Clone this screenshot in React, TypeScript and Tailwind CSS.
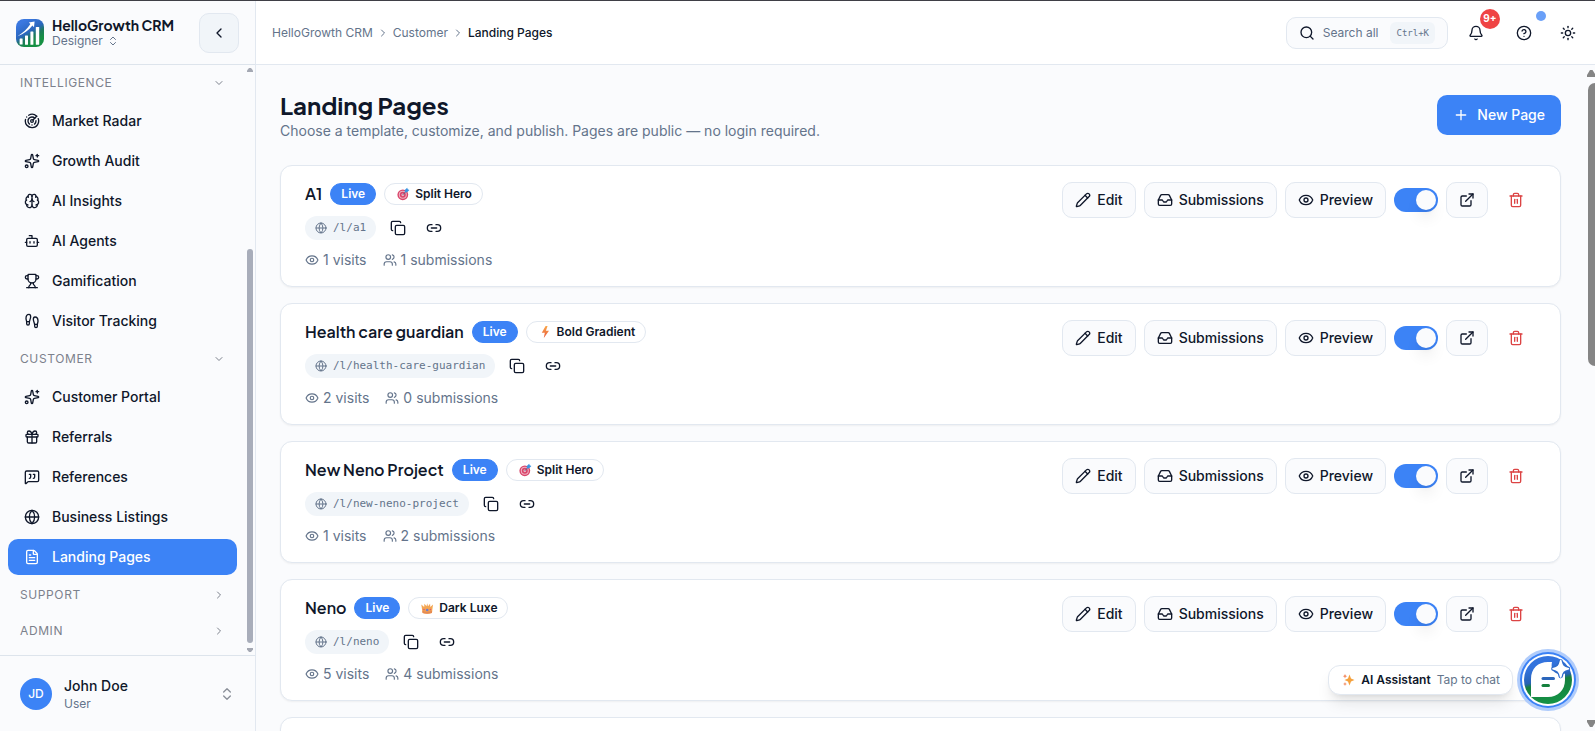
import React from "react";
import {
  Bell, Bot, Brain, ChevronDown, ChevronLeft, ChevronRight, ChevronsUpDown, CircleHelp, Copy, ExternalLink,
  Eye, FileText, Footprints, Gift, Globe, Inbox, Link2, MessageSquareQuote, Pencil, Plus, Radar, Search, Sparkles, Sun,
  Trash2, Trophy, Users,
} from "lucide-react";

type Template = "Split Hero" | "Bold Gradient" | "Dark Luxe";
type Page = { title: string; slug: string; template: Template; visits: number; submissions: number };

const pages: Page[] = [
  { title: "A1", slug: "a1", template: "Split Hero", visits: 1, submissions: 1 },
  { title: "Health care guardian", slug: "health-care-guardian", template: "Bold Gradient", visits: 2, submissions: 0 },
  { title: "New Neno Project", slug: "new-neno-project", template: "Split Hero", visits: 1, submissions: 2 },
  { title: "Neno", slug: "neno", template: "Dark Luxe", visits: 5, submissions: 4 },
];

const heading = "font-['Plus_Jakarta_Sans','Inter',sans-serif]";

function AppLogo() {
  return (
    <svg viewBox="0 0 28 28" className="size-7 shrink-0" aria-hidden="true">
      <defs>
        <linearGradient id="logo-bg" x1="0.2" y1="0" x2="0.8" y2="1">
          <stop offset="0.1" stopColor="#3b78e0" />
          <stop offset="0.45" stopColor="#2a66bd" />
          <stop offset="0.62" stopColor="#1d7a5c" />
          <stop offset="0.8" stopColor="#169044" />
        </linearGradient>
      </defs>
      <rect width="28" height="28" rx="8" fill="url(#logo-bg)" />
      <g fill="#fff">
        <rect x="3.6" y="19.5" width="3" height="6" rx="0.5" />
        <rect x="9" y="16.5" width="3" height="9.3" rx="0.5" />
        <rect x="14.4" y="12.5" width="3" height="13.3" rx="0.5" />
        <rect x="19.8" y="8" width="3.4" height="17.8" rx="0.5" />
        <path d="M12.8 3.4 18.6 2.4 18 8.2 16.4 6.4C12.5 11.3 8 14.8 1.5 17.2 7 13.6 11.2 9.8 14.4 4.9Z" />
      </g>
    </svg>
  );
}

function TemplateIcon({ name }: { name: Template }) {
  if (name === "Split Hero")
    return (
      <svg viewBox="0 0 16 16" className="size-4" aria-hidden="true">
        <circle cx="7.8" cy="8.8" r="5.4" fill="#d9456a" />
        <circle cx="7.8" cy="8.8" r="4" fill="#efb3c3" />
        <circle cx="7.8" cy="8.8" r="3" fill="#d9456a" />
        <circle cx="7.8" cy="8.8" r="1.4" fill="#efb3c3" />
        <path d="M7.8 8.8 12 4.5" stroke="#4b5d8a" strokeWidth="0.9" />
        <path d="M9.800 6.200V4L12.200 1.700 12.700 3.300 14.400 3.900 12.200 6.200Z" fill="#3b94e0" />
      </svg>
    );
  if (name === "Bold Gradient")
    return (
      <svg viewBox="0 0 16 16" className="size-4" aria-hidden="true">
        <defs>
          <linearGradient id="bolt" x1="0" y1="0" x2="0" y2="1">
            <stop offset="0" stopColor="#f9a94b" />
            <stop offset="1" stopColor="#e8553a" />
          </linearGradient>
        </defs>
        <path d="M8.6 2 4.8 8.8H7.8L6.8 14 12 6.8H8.9L10.6 2Z" fill="url(#bolt)" />
      </svg>
    );
  return (
    <svg viewBox="0 0 16 16" className="size-4" aria-hidden="true">
      <path d="M2.300 4.500 5.200 7 5.400 3.800 7.500 6.300 8.200 3.200 9 6.300 11.100 3.800 11.300 7 14 4.500 12.900 13Q8.200 14.600 3.600 13Z" fill="#f3a552" />
      <path d="M3.300 10.800Q8.200 12.600 13.200 10.800L12.900 13Q8.200 14.600 3.600 13Z" fill="#e68a52" />
      <circle cx="8.2" cy="10" r="1.3" fill="#6b7bd0" />
      <circle cx="5" cy="9.6" r="0.8" fill="#dd5a6e" />
      <circle cx="11.4" cy="9.6" r="0.8" fill="#dd5a6e" />
    </svg>
  );
}

function ChatLogo() {
  return (
    <svg viewBox="0 0 62 62" className="size-[62px]" aria-hidden="true">
      <defs>
        <linearGradient id="chat-bg" x1="0.35" y1="0" x2="0.6" y2="1">
          <stop offset="0.2" stopColor="#3373dd" />
          <stop offset="0.48" stopColor="#2762b4" />
          <stop offset="0.56" stopColor="#15803d" />
          <stop offset="1" stopColor="#159447" />
        </linearGradient>
      </defs>
      <circle cx="31" cy="31" r="31" fill="#b0ccfb" />
      <circle cx="31" cy="31" r="28" fill="#3b82f6" />
      <circle cx="31" cy="31" r="26" fill="#fff" />
      <circle cx="31" cy="31" r="24" fill="url(#chat-bg)" />
      <path d="M14 48V30C14 19.500 21 13 31 13H35C34 18 35 21 38 23.500 41 25.500 45 25.500 48 24.500V31C48 41 41 48 31 48Z" fill="#fff" />
      <path d="M43.700 12.500C44.700 17 46.200 18.600 51 19.700 46.200 20.800 44.700 22.400 43.700 27 42.700 22.400 41.200 20.800 36.400 19.700 41.200 18.600 42.700 17 43.700 12.500Z" fill="#fff" stroke="#2f6ccc" strokeWidth="4.500" strokeLinejoin="round" />
      <path d="M43.700 11.500C44.900 17 46.200 18.400 51.500 19.700 46.200 21 44.900 22.400 43.700 28 42.500 22.400 41.200 21 35.900 19.700 41.200 18.400 42.500 17 43.700 11.500Z" fill="#fff" stroke="#fff" strokeWidth="1.500" strokeLinejoin="round" />
      <path d="M26 29.500H36.500" stroke="#2c66bb" strokeWidth="3" strokeLinecap="round" />
      <path d="M26 36.500H31.500" stroke="#15803d" strokeWidth="3" strokeLinecap="round" />
    </svg>
  );
}

type Icon = React.ComponentType<{ className?: string }>;

function NavItem({ icon: I, label, active }: { icon: Icon; label: string; active?: boolean }) {
  return (
    <li>
      <a
        href="#"
        aria-current={active ? "page" : undefined}
        className={`flex h-9 items-center gap-3 rounded-[10px] px-4 text-sm font-medium ${active ? "bg-[#3c83f6] text-white" : "text-[#0f172a]"}`}
      >
        <I className="size-4" />
        {label}
      </a>
    </li>
  );
}

function Section({ label, items }: { label: string; items?: React.ReactNode }) {
  return (
    <section>
      <button type="button" className="flex h-9 w-full items-center justify-between px-3 text-xs tracking-wider text-[#7c818c]">
        {label}
        {items ? <ChevronDown className="size-3" /> : <ChevronRight className="size-3" />}
      </button>
      {items && <ul className="flex flex-col gap-1 py-0.5">{items}</ul>}
    </section>
  );
}

function Sidebar() {
  return (
    <aside className="flex w-64 shrink-0 flex-col border-r border-[#e2e8f0] bg-[#fafbfd]">
      <div className="flex h-16 shrink-0 items-center gap-2 border-b border-[#dde4ec] px-4">
        <AppLogo />
        <div className="min-w-0 flex-1">
          <p className={`text-sm leading-4 font-bold whitespace-nowrap ${heading}`}>HelloGrowth CRM</p>
          <button type="button" className="flex items-center gap-1 text-xs leading-4 text-[#64748b]">
            Designer
            <ChevronsUpDown className="size-3" />
          </button>
        </div>
        <button type="button" aria-label="Collapse sidebar" className="flex size-10 shrink-0 items-center justify-center rounded-[10px] border border-[#e2e8f0] bg-[#f1f5f9]">
          <ChevronLeft className="size-4" />
        </button>
      </div>
      <div className="flex min-h-0 flex-1">
        <nav aria-label="Main" className="min-w-0 flex-1 overflow-hidden px-2">
          <Section
            label="INTELLIGENCE"
            items={
              <>
                <NavItem icon={Radar} label="Market Radar" />
                <NavItem icon={Sparkles} label="Growth Audit" />
                <NavItem icon={Brain} label="AI Insights" />
                <NavItem icon={Bot} label="AI Agents" />
                <NavItem icon={Trophy} label="Gamification" />
                <NavItem icon={Footprints} label="Visitor Tracking" />
              </>
            }
          />
          <Section
            label="CUSTOMER"
            items={
              <>
                <NavItem icon={Sparkles} label="Customer Portal" />
                <NavItem icon={Gift} label="Referrals" />
                <NavItem icon={MessageSquareQuote} label="References" />
                <NavItem icon={Globe} label="Business Listings" />
                <NavItem icon={FileText} label="Landing Pages" active />
              </>
            }
          />
          <Section label="SUPPORT" />
          <Section label="ADMIN" />
        </nav>
        <div aria-hidden="true" className="flex w-2.5 flex-col items-center py-[3px]">
          <svg viewBox="0 0 6 4" className="h-1 w-1.5"><path d="M2 0H4L6 2.500V4H0V2.500Z" fill="#a4a8b3" /></svg>
          <div className="flex-[177]" />
          <div className="w-1.5 flex-[394] rounded-full bg-[#a8adba]" />
          <svg viewBox="0 0 6 4" className="mt-[5px] h-1 w-1.5"><path d="M2 4H4L6 1.500V0H0V1.500Z" fill="#a4a8b3" /></svg>
        </div>
      </div>
      <button type="button" className="flex h-[76px] shrink-0 items-center gap-3 border-t border-[#dde4ec] px-5 text-left">
        <span className="flex size-8 items-center justify-center rounded-full bg-[#3c83f6] text-xs font-medium text-white">JD</span>
        <span className="flex-1">
          <span className="block text-sm leading-5 font-medium">John Doe</span>
          <span className="block text-xs leading-4 text-[#64748b]">User</span>
        </span>
        <ChevronsUpDown className="size-4 text-[#8a8f99]" />
      </button>
    </aside>
  );
}

function TopBar() {
  return (
    <header className="flex h-16 shrink-0 items-center gap-2 border-b border-[#e2e8f0] bg-white pr-[11px] pl-4">
      <nav aria-label="Breadcrumb" className="flex flex-1 items-center gap-1 text-xs text-[#64748b]">
        <a href="#">HelloGrowth CRM</a>
        <ChevronRight className="size-3" />
        <a href="#">Customer</a>
        <ChevronRight className="size-3" />
        <span aria-current="page" className="font-medium text-[#0f172a]">Landing Pages</span>
      </nav>
      <button type="button" className="flex h-8 items-center gap-2 rounded-[10px] border border-[#e2e8f0] bg-[#fafbfd] px-3 text-xs text-[#64748b]">
        <Search className="size-4 text-[#0f172a]" />
        Search all
        <kbd className="ml-1 flex h-[22px] items-center rounded-md bg-[#f1f5f9] px-1.5 font-['DejaVu_Sans_Mono',monospace] text-[9px]">Ctrl+K</kbd>
      </button>
      <button type="button" aria-label="Notifications" className="relative flex size-10 items-center justify-center">
        <Bell className="size-4" />
        <span className="absolute -top-1 -right-1 flex size-5 items-center justify-center rounded-full bg-[#ef4444] text-[10px] font-bold text-white">9+</span>
      </button>
      <button type="button" aria-label="Help" className="relative flex size-10 items-center justify-center">
        <CircleHelp className="size-4" />
        <span className="absolute -top-0.5 -right-0.5 size-2.5 rounded-full bg-[#6aa0f8]" />
      </button>
      <button type="button" aria-label="Theme" className="flex h-10 w-8 items-center justify-center">
        <Sun className="size-4" />
      </button>
    </header>
  );
}

const outline = "flex h-9 items-center gap-1.5 rounded-[10px] border border-[#e2e8f0] bg-[#fafbfd] px-3 text-sm font-medium";

function PageCard({ page }: { page: Page }) {
  return (
    <article className="flex items-start justify-between gap-4 rounded-xl border border-[#e2e8f0] bg-white px-6 py-4 shadow-xs">
      <div className="flex flex-col gap-2">
        <div className="flex h-6 items-center gap-2">
          <h2 className={`text-base font-semibold ${heading}`}>{page.title}</h2>
          <span className="rounded-full border border-[#3c83f6] bg-[#3c83f6] px-2.5 py-0.5 text-xs font-semibold text-white">Live</span>
          <span className="flex items-center gap-1 rounded-full border border-[#e2e8f0] px-2.5 py-0.5 text-xs font-semibold">
            <TemplateIcon name={page.template} />
            {page.template}
          </span>
        </div>
        <div className="flex h-7 items-center gap-2">
          <span className="flex h-6 items-center gap-1.5 rounded-full bg-[#f1f5f9] px-2.5 font-['DejaVu_Sans_Mono',monospace] text-[11px] text-[#64748b]">
            <Globe className="size-3" />
            /l/{page.slug}
          </span>
          <button type="button" aria-label="Copy link" className="flex size-7 items-center justify-center"><Copy className="size-4" /></button>
          <button type="button" aria-label="Edit link" className="flex size-7 items-center justify-center"><Link2 className="size-4" /></button>
        </div>
        <div className="flex h-5 items-center gap-4 text-sm text-[#64748b]">
          <span className="flex items-center gap-1"><Eye className="size-3.5" />{page.visits} visits</span>
          <span className="flex items-center gap-1"><Users className="size-3.5" />{page.submissions} submissions</span>
        </div>
      </div>
      <div className="flex items-center gap-2">
        <button type="button" className={outline}><Pencil className="size-4" />Edit</button>
        <button type="button" className={outline}><Inbox className="size-4" />Submissions</button>
        <button type="button" className={outline}><Eye className="size-4" />Preview</button>
        <label className="flex h-6 w-11 cursor-pointer items-center rounded-full bg-[#cbd5e1] p-0.5 has-checked:justify-end has-checked:bg-[#3c83f6]">
          <input type="checkbox" role="switch" defaultChecked aria-label={`Publish ${page.title}`} className="size-5 appearance-none rounded-full bg-[#fafbfd] shadow-lg" />
        </label>
        <button type="button" aria-label="Open page" className={outline}><ExternalLink className="size-4" /></button>
        <button type="button" aria-label="Delete page" className="flex h-9 items-center px-3 text-[#dc4444]"><Trash2 className="size-4" /></button>
      </div>
    </article>
  );
}

export default function App() {
  return (
    <div className="relative flex h-screen overflow-hidden border-t border-[#3f3f46] bg-[#fafbfd] font-['Inter',sans-serif] text-[#0f172a]">
      <Sidebar />
      <div className="flex min-w-0 flex-1 flex-col">
        <TopBar />
        <div className="flex min-h-0 flex-1">
          <main className="min-w-0 flex-1 overflow-hidden p-6">
            <div className="mb-6 flex items-center justify-between">
              <div>
                <h1 className={`text-2xl leading-8 font-bold ${heading}`}>Landing Pages</h1>
                <p className="text-sm text-[#64748b]">Choose a template, customize, and publish. Pages are public — no login required.</p>
              </div>
              <button type="button" className="flex h-10 items-center gap-2 rounded-[10px] bg-[#3c83f6] px-4 text-sm font-medium text-white">
                <Plus className="size-4" />
                New Page
              </button>
            </div>
            <div className="flex flex-col gap-4">
              {pages.map((p) => <PageCard key={p.slug} page={p} />)}
              <article className="h-28 rounded-xl border border-[#e2e8f0] bg-white shadow-xs" />
            </div>
          </main>
          <div aria-hidden="true" className="flex w-2.5 shrink-0 flex-col items-end overflow-hidden pt-[5px] pb-1">
            <svg viewBox="0 0 8 7" className="h-[7px] w-2"><path d="M3 0H5.500L8 4V7H0V5Z" fill="#858585" /></svg>
            <div className="mt-1.5 w-[7px] flex-[283] rounded-l-full bg-[#858585]" />
            <div className="flex-[354]" />
            <svg viewBox="0 0 8 7" className="h-[7px] w-2"><path d="M3 7H5.500L8 3V0H0V2Z" fill="#858585" /></svg>
          </div>
        </div>
      </div>
      <div className="absolute right-4 bottom-5 flex items-center gap-1">
        <span className="flex h-[30px] items-center gap-1.5 rounded-xl border border-[#e2e8f0] bg-white px-3 text-xs text-[#64748b] shadow-lg">
          <svg viewBox="0 0 14 14" className="size-3.5" aria-hidden="true">
            <path d="M8.500 1.500 10 5.500 13.500 7 10 8.500 8.500 12.500 7 8.500 3.500 7 7 5.500Z" fill="#f5a13d" />
            <path d="M4 1 4.700 2.600 6.200 3.200 4.700 3.800 4 5.400 3.300 3.800 1.800 3.200 3.300 2.600ZM4 9 4.600 10.500 6 11 4.600 11.500 4 13 3.400 11.500 2 11 3.400 10.500Z" fill="#f2855a" />
          </svg>
          <strong className="font-semibold text-[#0f172a]">AI Assistant</strong>
          Tap to chat
        </span>
        <button type="button" aria-label="Open AI Assistant" className="rounded-full"><ChatLogo /></button>
      </div>
    </div>
  );
}
